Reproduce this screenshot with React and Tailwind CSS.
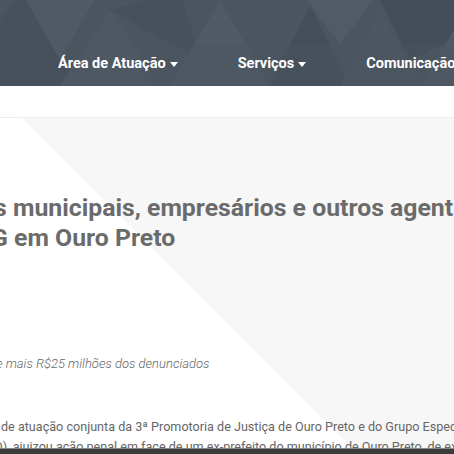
import React from "react";

function Caret() {
  return (
    <span className="ml-[4px] inline-block h-0 w-0 border-x-[4.5px] border-t-[5px] border-x-transparent border-t-white align-middle" />
  );
}

function HeaderPattern() {
  return (
    <svg className="absolute inset-0 h-full w-full" viewBox="0 0 454 86" preserveAspectRatio="none">
      <rect width="454" height="86" fill="#4a555f" />
      <polygon points="-40,86 20,-10 80,86" fill="#46515b" />
      <polygon points="20,-10 100,-10 60,60" fill="#4f5a64" />
      <polygon points="60,86 110,10 160,86" fill="#4d5863" />
      <polygon points="110,10 180,-10 200,60" fill="#46515b" />
      <polygon points="170,86 220,0 270,86" fill="#4f5a65" />
      <polygon points="270,86 310,5 350,86" fill="#444f59" />
      <polygon points="300,-10 380,-10 340,45" fill="#505b66" />
      <polygon points="340,86 380,10 420,86" fill="#4c5762" />
      <polygon points="380,0 454,0 454,40 410,60" fill="#434e58" />
      <polygon points="420,86 454,30 480,86" fill="#4f5a64" />
      <polygon points="140,45 454,45 454,86 140,86" fill="#4b5660" opacity="0.35" />
    </svg>
  );
}

export default function App() {
  return (
    <div className="flex h-[454px] w-[454px] flex-col overflow-hidden bg-white font-['Roboto',sans-serif]">
      <header className="relative h-[86px] shrink-0 overflow-hidden">
        <HeaderPattern />
        <nav className="relative flex gap-[60px] whitespace-nowrap pl-[58px] pt-[54px] text-[14.5px] font-bold leading-5 text-white">
          <span>Área de Atuação<Caret /></span>
          <span>Serviços<Caret /></span>
          <span>Comunicação<Caret /></span>
        </nav>
      </header>
      <div className="h-[31px] shrink-0 bg-white" />
      <main className="relative flex-1 overflow-hidden border-t border-[#eeeeee] bg-[#f7f7f7]">
        <svg className="absolute inset-0 h-full w-full" viewBox="0 0 454 336" preserveAspectRatio="none">
          <polygon points="0,0 22,0 358,336 0,336" fill="#ffffff" />
        </svg>
        <div className="relative pt-[75px]">
          <h1 className="whitespace-nowrap text-[24.8px] font-bold leading-[30px] text-[#6b6b6b]">
            <div className="ml-[-6px]">s municipais, empresários e outros agentes</div>
            <div className="ml-[-9px]">G em Ouro Preto</div>
          </h1>
          <p className="ml-[-4px] mt-[101px] whitespace-nowrap text-[13px] font-light italic leading-5 text-[#666666]">
            e mais R$25 milhões dos denunciados
          </p>
          <div className="mt-[43px] whitespace-nowrap text-[12.6px] leading-5 text-[#666666]">
            <p className="ml-[1px]">de atuação conjunta da 3ª Promotoria de Justiça de Ouro Preto e do Grupo Especial</p>
            <p className="ml-[-6px]">O), ajuizou ação penal em face de um ex-prefeito do município de Ouro Preto, de ex-agentes</p>
          </div>
        </div>
        <div className="absolute bottom-0 left-0 right-0 h-[6px] border-t border-[#8a8a8a] bg-[#3c3c3c]" />
      </main>
    </div>
  );
}
